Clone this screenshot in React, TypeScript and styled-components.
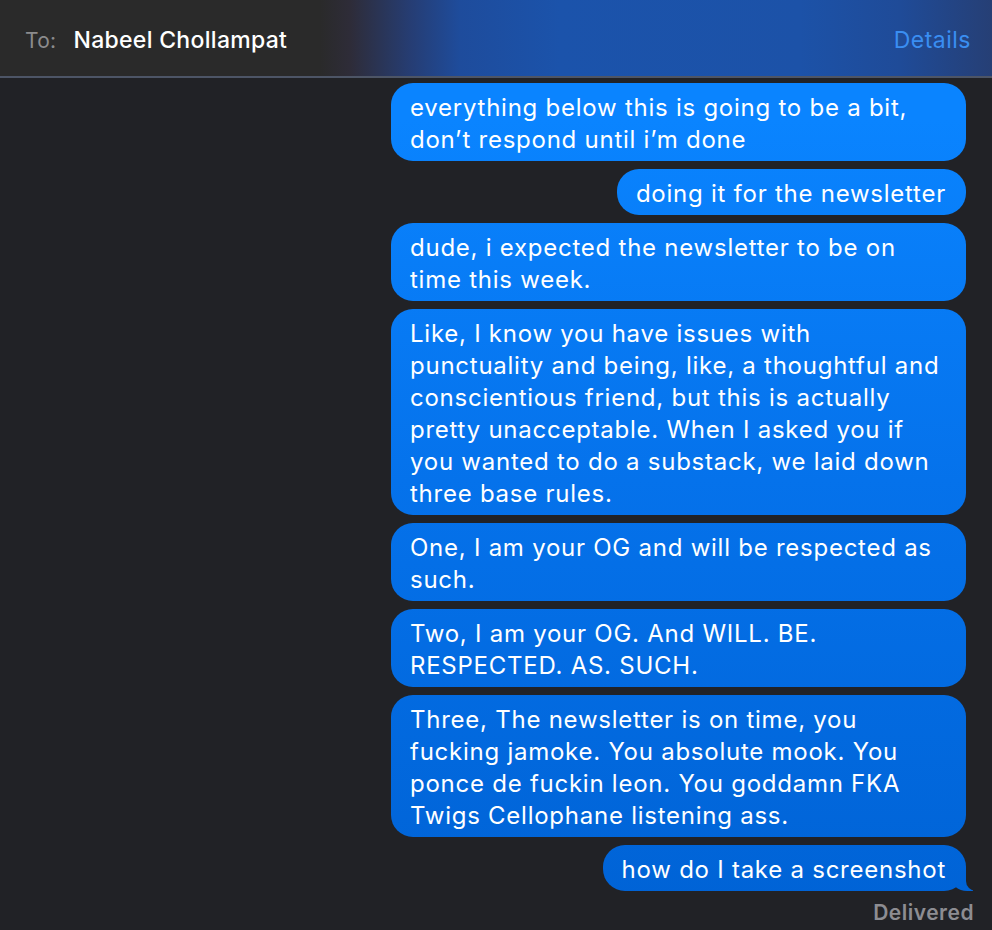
import styled, { createGlobalStyle } from 'styled-components';

const GlobalStyle = createGlobalStyle`
  html, body {
    margin: 0;
    padding: 0;
    background: #212226;
  }
  body {
    font-family: Inter, "Noto Sans", "Liberation Sans", sans-serif;
    -webkit-font-smoothing: antialiased;
  }
`;

const bubbleFill = 'linear-gradient(180deg, #0a84ff 0px, #0a84ff 120px, #0572eb 480px, #0063d6 900px) fixed';

interface MessageT {
  lines: string[];
  tail?: boolean;
}

const messages: MessageT[] = [
  { lines: ['everything below this is going to be a bit,', 'don\u2019t respond until i\u2019m done'] },
  { lines: ['doing it for the newsletter'] },
  { lines: ['dude, i expected the newsletter to be on', 'time this week.'] },
  {
    lines: [
      'Like, I know you have issues with',
      'punctuality and being, like, a thoughtful and',
      'conscientious friend, but this is actually',
      'pretty unacceptable. When I asked you if',
      'you wanted to do a substack, we laid down',
      'three base rules.',
    ],
  },
  { lines: ['One, I am your OG and will be respected as', 'such.'] },
  { lines: ['Two, I am your OG. And WILL. BE.', 'RESPECTED. AS. SUCH.'] },
  {
    lines: [
      'Three, The newsletter is on time, you',
      'fucking jamoke. You absolute mook. You',
      'ponce de fuckin leon. You goddamn FKA',
      'Twigs Cellophane listening ass.',
    ],
  },
  { lines: ['how do I take a screenshot'], tail: true },
];

export default function App() {
  return (
    <>
      <GlobalStyle />
      <Window>
        <Header>
          <Recipient>
            <ToLabel>To:</ToLabel>
            <Name>Nabeel Chollampat</Name>
          </Recipient>
          <DetailsLink>Details</DetailsLink>
        </Header>
        <Thread>
          {messages.map((msg, idx) => (
            <Bubble key={idx} $wide={msg.lines.length > 1} $tail={!!msg.tail}>
              {msg.lines.map((line, lineIdx) => (
                <Line key={lineIdx}>{line}</Line>
              ))}
            </Bubble>
          ))}
          <Status>Delivered</Status>
        </Thread>
      </Window>
    </>
  );
}

const Window = styled.div`
  width: 992px;
  height: 930px;
  overflow: hidden;
  background: #212226;
`;

const Header = styled.header`
  box-sizing: border-box;
  height: 78px;
  display: flex;
  align-items: center;
  justify-content: space-between;
  padding: 3px 21px 0 25px;
  background: linear-gradient(
    90deg,
    #2a2a2a 0px,
    #2a2a2a 320px,
    #2e2c38 350px,
    #263d73 410px,
    #1e4c9c 460px,
    #1b53ab 560px,
    #1c52a8 800px,
    #1f4b98 900px,
    #263f75 992px
  );
  border-bottom: 2px solid #4d5566;
`;

const Recipient = styled.div`
  display: flex;
  align-items: baseline;
  gap: 17px;
`;

const ToLabel = styled.span`
  font-size: 21px;
  letter-spacing: 0.3px;
  color: #8b8b8d;
`;

const Name = styled.span`
  font-size: 23px;
  font-weight: 500;
  letter-spacing: 0.3px;
  color: #ffffff;
`;

const DetailsLink = styled.span`
  font-size: 23px;
  letter-spacing: 0.5px;
  color: #3a8ef2;
`;

const Thread = styled.main`
  display: flex;
  flex-direction: column;
  align-items: flex-end;
  gap: 8px;
  padding: 5px 26px 0 0;
`;

const Bubble = styled.div<{ $wide: boolean; $tail: boolean }>`
  position: relative;
  box-sizing: border-box;
  width: ${p => (p.$wide ? '575px' : 'auto')};
  padding: 9px 20px 5px 19px;
  border-radius: 22px;
  background: ${bubbleFill};
  color: #ffffff;
  font-size: 24px;
  letter-spacing: 0.75px;
  line-height: 32px;

  ${p =>
    p.$tail &&
    `
    &::before {
      content: '';
      position: absolute;
      right: -7px;
      bottom: 0;
      width: 22px;
      height: 22px;
      background: ${bubbleFill};
      border-bottom-left-radius: 16px 14px;
    }
    &::after {
      content: '';
      position: absolute;
      right: -26px;
      bottom: 0;
      width: 26px;
      height: 22px;
      background: #212226;
      border-bottom-left-radius: 10px;
    }
  `}
`;

const Line = styled.div`
  position: relative;
  z-index: 1;
  white-space: nowrap;
`;

const Status = styled.div`
  margin: 1px -8px 0 0;
  font-size: 21px;
  font-weight: 600;
  letter-spacing: 0.5px;
  color: #8d8d92;
`;
